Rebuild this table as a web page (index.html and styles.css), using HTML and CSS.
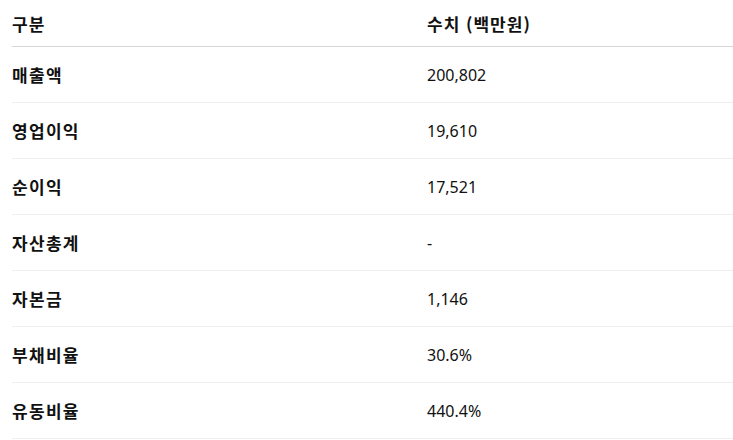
FILE: index.html
```html
<!DOCTYPE html>
<html lang="ko">
<head>
<meta charset="utf-8">
<link rel="stylesheet" href="styles.css">
</head>
<body>
<div class="wrap">
<table class="fin">
  <thead>
    <tr><th>구분</th><th>수치 (백만원)</th></tr>
  </thead>
  <tbody>
    <tr><td class="label">매출액</td><td>200,802</td></tr>
    <tr><td class="label">영업이익</td><td>19,610</td></tr>
    <tr><td class="label">순이익</td><td>17,521</td></tr>
    <tr><td class="label">자산총계</td><td>-</td></tr>
    <tr><td class="label">자본금</td><td>1,146</td></tr>
    <tr><td class="label">부채비율</td><td>30.6%</td></tr>
    <tr><td class="label">유동비율</td><td>440.4%</td></tr>
  </tbody>
</table>
</div>
</body>
</html>
```
FILE: styles.css
```css
html, body {
  margin: 0;
  padding: 0;
  background: #ffffff;
}
body {
  font-family: "Noto Sans", "Noto Sans CJK KR", sans-serif;
  font-size: 16px;
  color: #111111;
}
.wrap {
  padding-left: 12px;
}
.fin {
  width: 100%;
  border-collapse: collapse;
}
.fin th, .fin td {
  text-align: left;
  padding: 0;
  vertical-align: middle;
}
.fin th {
  height: 46px;
  font-family: "Noto Sans CJK KR", sans-serif;
  font-size: 17px;
  font-weight: 700;
  letter-spacing: 1px;
  border-bottom: 1px solid #d6d6d6;
}
.fin td {
  height: 55px;
  border-bottom: 1px solid #efefef;
}
.fin th:first-child, .fin td:first-child {
  width: 415px;
}
.label {
  font-size: 17px;
  font-weight: 700;
  letter-spacing: 1.3px;
}
```
